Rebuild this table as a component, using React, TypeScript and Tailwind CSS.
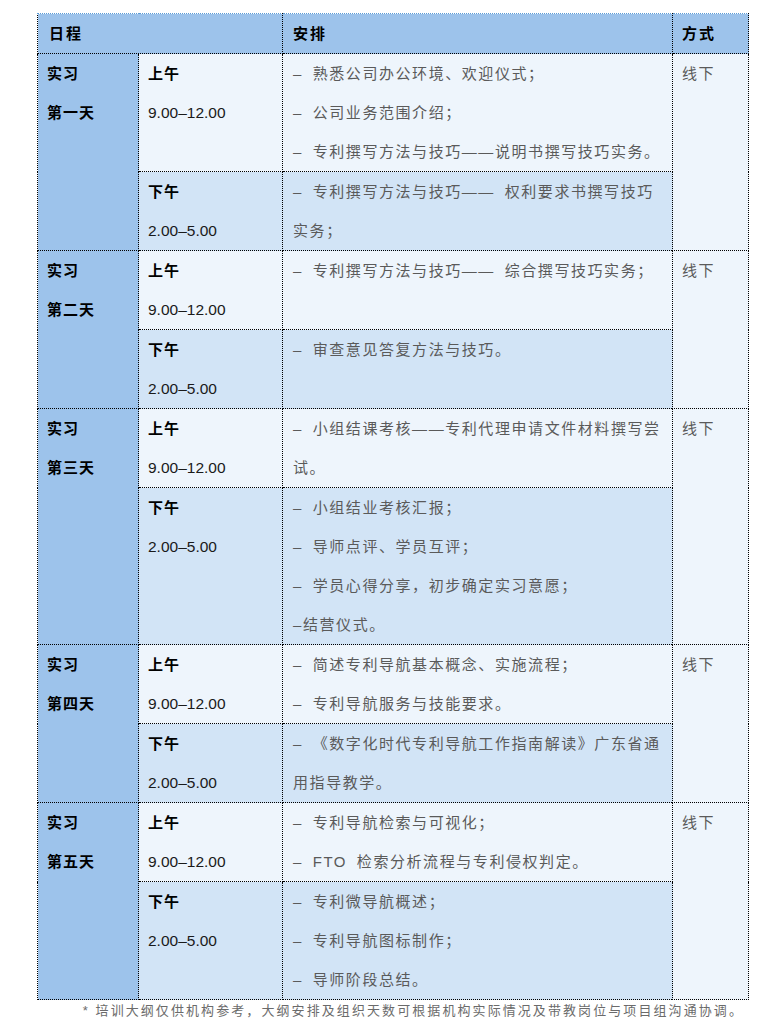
import React from "react";

type Slot = { label: string; time: string; items: string[] };
type Day = { name: string; am: Slot; pm: Slot; mode: string };

const days: Day[] = [
  {
    name: "第一天",
    am: {
      label: "上午",
      time: "9.00–12.00",
      items: ["– 熟悉公司办公环境、欢迎仪式；", "– 公司业务范围介绍；", "– 专利撰写方法与技巧——说明书撰写技巧实务。"],
    },
    pm: {
      label: "下午",
      time: "2.00–5.00",
      items: ["– 专利撰写方法与技巧—— 权利要求书撰写技巧实务；"],
    },
    mode: "线下",
  },
  {
    name: "第二天",
    am: { label: "上午", time: "9.00–12.00", items: ["– 专利撰写方法与技巧—— 综合撰写技巧实务；"] },
    pm: { label: "下午", time: "2.00–5.00", items: ["– 审查意见答复方法与技巧。"] },
    mode: "线下",
  },
  {
    name: "第三天",
    am: { label: "上午", time: "9.00–12.00", items: ["– 小组结课考核——专利代理申请文件材料撰写尝试。"] },
    pm: {
      label: "下午",
      time: "2.00–5.00",
      items: ["– 小组结业考核汇报；", "– 导师点评、学员互评；", "– 学员心得分享，初步确定实习意愿；", "–结营仪式。"],
    },
    mode: "线下",
  },
  {
    name: "第四天",
    am: { label: "上午", time: "9.00–12.00", items: ["– 简述专利导航基本概念、实施流程；", "– 专利导航服务与技能要求。"] },
    pm: { label: "下午", time: "2.00–5.00", items: ["– 《数字化时代专利导航工作指南解读》广东省通用指导教学。"] },
    mode: "线下",
  },
  {
    name: "第五天",
    am: { label: "上午", time: "9.00–12.00", items: ["– 专利导航检索与可视化；", "– FTO 检索分析流程与专利侵权判定。"] },
    pm: { label: "下午", time: "2.00–5.00", items: ["– 专利微导航概述；", "– 专利导航图标制作；", "– 导师阶段总结。"] },
    mode: "线下",
  },
];

const font = { fontFamily: '"Liberation Sans", "Noto Sans CJK SC", sans-serif' };

const cell = "border border-dotted border-black align-top p-0 leading-[39px]";

const SlotCells = ({ slot, bg }: { slot: Slot; bg: string }) => (
  <>
    <td className={`${cell} ${bg} pl-[9px]`}>
      <div className="text-[15px] font-bold tracking-[1px] text-black">{slot.label}</div>
      <div className="text-[15.5px] text-[#1a1a1a]">{slot.time}</div>
    </td>
    <td className={`${cell} ${bg} pl-[10px] pr-[5px]`}>
      {slot.items.map((t) => (
        <div key={t} className="text-[15px] tracking-[1.57px] [word-spacing:4px] text-[#5a5a5a]">
          {t}
        </div>
      ))}
    </td>
  </>
);

export default function App() {
  return (
    <div className="bg-white min-h-[1027px] pt-[13px]" style={font}>
      <table className="ml-[37px] w-[711px] table-fixed border-collapse">
        <colgroup>
          <col className="w-[101px]" />
          <col className="w-[144px]" />
          <col className="w-[390px]" />
          <col className="w-[76px]" />
        </colgroup>
        <thead>
          <tr className="bg-[#9dc3eb]">
            <th colSpan={2} className={`${cell} border-t-[1.5px] border-t-solid border-t-[#5b9bd5] pl-[11px] text-left text-[15px] font-bold tracking-[2px] text-black`}>
              日程
            </th>
            <th className={`${cell} border-t-[1.5px] border-t-solid border-t-[#5b9bd5] pl-[10px] text-left text-[15px] font-bold tracking-[2px] text-black`}>
              安排
            </th>
            <th className={`${cell} border-t-[1.5px] border-t-solid border-t-[#5b9bd5] pl-[9px] text-left text-[15px] font-bold tracking-[2px] text-black`}>
              方式
            </th>
          </tr>
        </thead>
        <tbody>
          {days.map((d) => (
            <React.Fragment key={d.name}>
              <tr>
                <td rowSpan={2} className={`${cell} bg-[#9dc3eb] pl-[9px] text-[15px] font-bold tracking-[1px] text-black`}>
                  <div>实习</div>
                  <div>{d.name}</div>
                </td>
                <SlotCells slot={d.am} bg="bg-[#eef5fc]" />
                <td rowSpan={2} className={`${cell} bg-[#eef5fc] pl-[9px] text-[15px] tracking-[1.57px] text-[#5a5a5a]`}>
                  {d.mode}
                </td>
              </tr>
              <tr>
                <SlotCells slot={d.pm} bg="bg-[#d2e4f6]" />
              </tr>
            </React.Fragment>
          ))}
        </tbody>
      </table>
      <p className="mr-[39px] mt-[1px] text-right text-[13px] leading-[20px] tracking-[2.08px] text-[#6b6b6b]">
        * 培训大纲仅供机构参考，大纲安排及组织天数可根据机构实际情况及带教岗位与项目组沟通协调。
      </p>
    </div>
  );
}
